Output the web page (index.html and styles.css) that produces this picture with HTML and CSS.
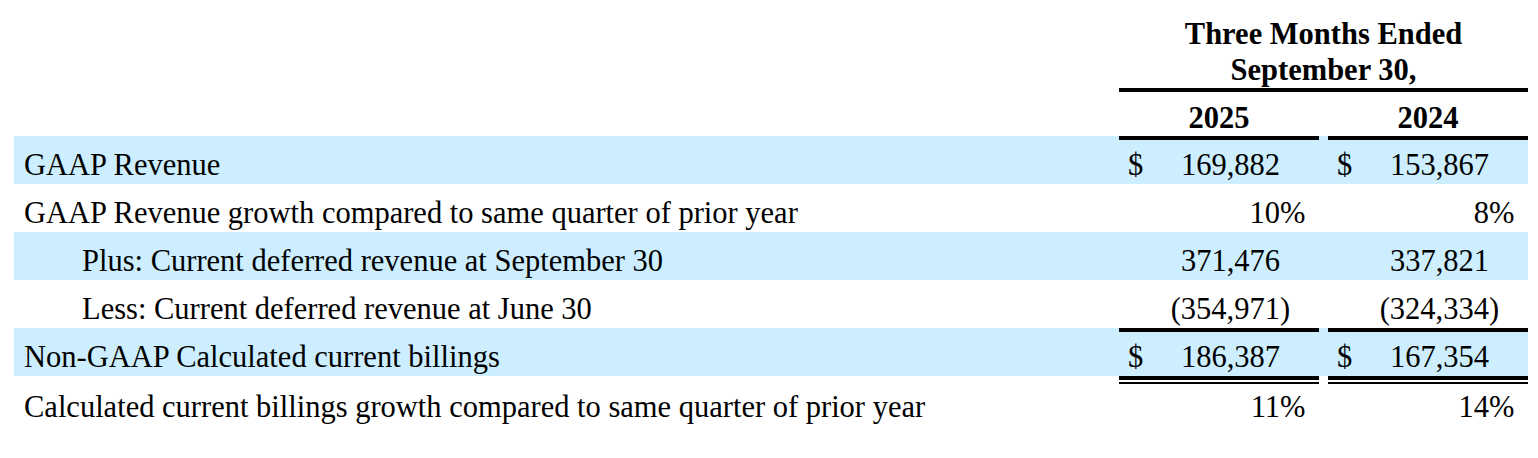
FILE: index.html
```html
<!DOCTYPE html>
<html lang="en">
<head>
    <meta charset="UTF-8">
    <title>Calculated current billings</title>
    <link rel="stylesheet" href="styles.css">
</head>
<body>
<div class="wrap">
    <table class="fin">
        <colgroup>
            <col class="c-label">
            <col class="c-cur"><col class="c-num"><col class="c-suf">
            <col class="c-gap">
            <col class="c-cur"><col class="c-num"><col class="c-suf">
        </colgroup>
        <tr class="r-head">
            <td></td>
            <td colspan="7" class="head">Three Months Ended<br>September 30,</td>
        </tr>
        <tr class="r-year">
            <td></td>
            <td colspan="3" class="year">2025</td>
            <td></td>
            <td colspan="3" class="year">2024</td>
        </tr>
        <tr class="shade">
            <td class="label">GAAP Revenue</td>
            <td class="cur rule">$</td><td class="num rule">169,882</td><td class="suf rule"></td>
            <td></td>
            <td class="cur rule">$</td><td class="num rule">153,867</td><td class="suf rule"></td>
        </tr>
        <tr>
            <td class="label">GAAP Revenue growth compared to same quarter of prior year</td>
            <td class="cur"></td><td class="num">10</td><td class="suf">%</td>
            <td></td>
            <td class="cur"></td><td class="num">8</td><td class="suf">%</td>
        </tr>
        <tr class="shade">
            <td class="label indent">Plus: Current deferred revenue at September 30</td>
            <td class="cur"></td><td class="num">371,476</td><td class="suf"></td>
            <td></td>
            <td class="cur"></td><td class="num">337,821</td><td class="suf"></td>
        </tr>
        <tr>
            <td class="label indent">Less: Current deferred revenue at June 30</td>
            <td class="cur"></td><td class="num">(354,971</td><td class="suf">)</td>
            <td></td>
            <td class="cur"></td><td class="num">(324,334</td><td class="suf">)</td>
        </tr>
        <tr class="shade">
            <td class="label">Non-GAAP Calculated current billings</td>
            <td class="cur rule">$</td><td class="num rule">186,387</td><td class="suf rule"></td>
            <td></td>
            <td class="cur rule">$</td><td class="num rule">167,354</td><td class="suf rule"></td>
        </tr>
        <tr class="r-last">
            <td class="label">Calculated current billings growth compared to same quarter of prior year</td>
            <td class="cur dbl"></td><td class="num dbl">11</td><td class="suf dbl">%</td>
            <td></td>
            <td class="cur dbl"></td><td class="num dbl">14</td><td class="suf dbl">%</td>
        </tr>
    </table>
</div>
</body>
</html>
```

FILE: styles.css
```css
body {
    margin: 0;
    background: #fff;
    color: #000;
    font-family: "Liberation Serif", "Times New Roman", serif;
    font-size: 30.5px;
}

.wrap {
    padding: 0 10px 0 14px;
}

.fin {
    width: 1514px;
    table-layout: fixed;
    border-collapse: separate;
    border-spacing: 0;
    line-height: 36px;
}
.fin td {
    padding: 0 0 1px;
    vertical-align: bottom;
    white-space: nowrap;
}

.c-label { width: 1105px; }
.c-cur { width: 30px; }
.c-num { width: 131px; }
.c-suf { width: 39px; }
.c-gap { width: 9px; }

.fin tr { height: 48px; }
.fin tr.r-head { height: 92px; }
.fin tr.r-year { height: 44px; }
.fin tr.r-last { height: 50px; }

.fin .head,
.fin .year {
    padding-bottom: 0;
}

.shade td {
    background: #cceeff;
}

.head {
    font-weight: bold;
    text-align: center;
    border-bottom: 4px solid #000;
}
.year {
    font-weight: bold;
    text-align: center;
}

.fin .label {
    padding-left: 10px;
}
.fin .label.indent {
    padding-left: 68px;
}

.fin .cur {
    padding-left: 9px;
    text-align: left;
}
.num {
    text-align: right;
}
.suf {
    text-align: left;
}

/* single rule over totals */
.rule {
    border-top: 4px solid #000;
}
/* double rule under the billings total */
.dbl {
    border-top: 4px solid #000;
    box-shadow: inset 0 2px 0 #fff, inset 0 4px 0 #000;
}
```
